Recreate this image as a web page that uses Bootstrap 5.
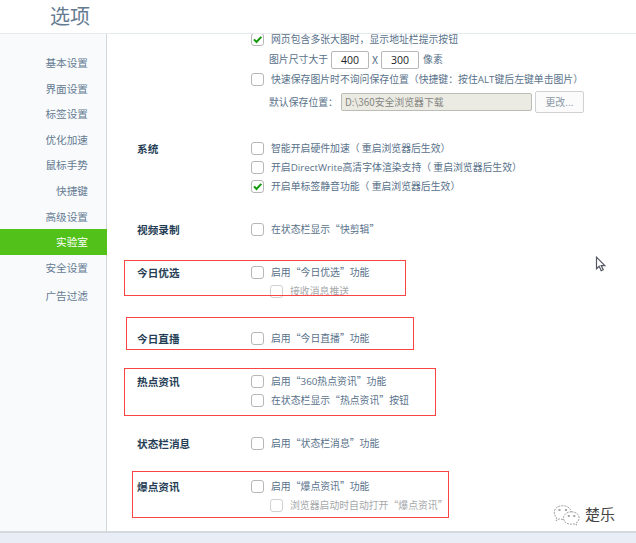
<!DOCTYPE html>
<html lang="zh-CN">
<head>
<meta charset="utf-8">
<meta name="viewport" content="width=device-width, initial-scale=1">
<title>选项</title>
<link href="https://cdn.jsdelivr.net/npm/bootstrap@5.3.0/dist/css/bootstrap.min.css" rel="stylesheet">
<style>
body{width:636px;height:543px;font-family:"Noto Sans CJK SC",sans-serif;font-size:9.85px;line-height:19px;color:#58718a;background:#fff}
.page-head{height:34px;border-bottom:1px solid #e6ebee;padding-left:50px}
.page-head h1{font-size:20px;line-height:32px;font-weight:400;color:#657b92}
.main{height:497px}
.side{width:107px;background:#f8fafc;border-right:1px solid #d3d7da;padding-top:16px}
.side .nav-link{font-size:10.65px;line-height:25.6px;height:25.6px;padding:0 18px 0 0;text-align:right;color:#657b92;white-space:nowrap}
.side .nav-link.active{background:#52c11a;color:#fff;margin-right:-1px;padding-right:19px}
.side .nav-link.spaced{margin-top:3px}
.content-pane{padding-left:30px}
.opt-group{margin-top:24px}
.group-name{width:114px;font-size:10.65px;font-weight:700;color:#263e55}
.opt{height:19px;white-space:nowrap}
.opt label{line-height:11px}
.opt .form-check-input{width:13px;height:13px;margin:0 7px 0 0;border:1.5px solid #b7b7b7;border-radius:3px;background-color:#fff;flex:none}
.opt .form-check-input:checked{background-color:#fff;background-size:11px 11px;background-image:url("data:image/svg+xml,%3Csvg xmlns='http://www.w3.org/2000/svg' viewBox='0 0 11 11'%3E%3Cpath d='M2 5.4 4.5 8 9.3 2.9' fill='none' stroke='%23149a0a' stroke-width='2'/%3E%3C/svg%3E")}
.opt.sub{padding-left:19px;color:#a5a8aa}
.opt.sub .form-check-input{border-color:#d0d0d0;opacity:1}
.opt.sub label{opacity:1}
.first-group{margin-top:-4px}
.indent{padding-left:18px;white-space:nowrap;height:21px}
.indent.tall{height:26px}
.indent .lead-in{margin-right:3px}
.times{width:12px;text-align:center;font-size:10.5px}
.num{width:38px;height:18px;padding:0;border:1px solid #b8b8b8;border-radius:2px;font-size:10.5px;line-height:16px;color:#222;text-align:center;background:#fff;font-family:"Open Sans","Noto Sans CJK SC",sans-serif}
.path-box,.path-box:disabled{width:191px;height:18px;padding:0 3px;border:1px solid #bbbcb6;border-radius:2px;background:#ebebe4;color:#858681;font-size:9.85px;line-height:16px}
.btn-change{width:49px;height:22px;margin-left:3px;padding:0;border:1px solid #cfd1d3;border-radius:2px;background:#fbfbfb;color:#8796a5;font-size:9.85px;line-height:20px}
.latin{font-family:"Open Sans",sans-serif;font-size:9.8px}
.foot{height:12px;background:#e9eef6;border-top:2px solid #d3d9df}
.frame{position:absolute;border:1px solid #fb4545;pointer-events:none}
.f1{left:124px;top:260px;width:282px;height:36px}
.f2{left:126px;top:317px;width:288px;height:33px}
.f3{left:124px;top:368px;width:312px;height:48px}
.f4{left:132px;top:471px;width:317px;height:47px}
.pointer{position:absolute;left:595px;top:256px}
.account{position:absolute;left:552px;top:500px;font-size:15px;line-height:28px;color:#444}
</style>
<script src="https://cdn.jsdelivr.net/npm/bootstrap@5.3.0/dist/js/bootstrap.bundle.min.js"></script>
</head>
<body class="position-relative overflow-hidden">
<header class="page-head"><h1 class="m-0">选项</h1></header>
<div class="main d-flex overflow-hidden">
  <nav class="side nav flex-column flex-nowrap flex-shrink-0">
    <a class="nav-link" href="#">基本设置</a>
    <a class="nav-link" href="#">界面设置</a>
    <a class="nav-link" href="#">标签设置</a>
    <a class="nav-link" href="#">优化加速</a>
    <a class="nav-link" href="#">鼠标手势</a>
    <a class="nav-link" href="#">快捷键</a>
    <a class="nav-link" href="#">高级设置</a>
    <a class="nav-link active" href="#">实验室</a>
    <a class="nav-link" href="#">安全设置</a>
    <a class="nav-link spaced" href="#">广告过滤</a>
  </nav>
  <main class="content-pane flex-grow-1">
    <section class="first-group d-flex">
      <div class="group-name flex-shrink-0"></div>
      <div>
        <div class="opt d-flex align-items-center"><input class="form-check-input" type="checkbox" id="c1" checked><label for="c1">网页包含多张大图时，显示地址栏提示按钮</label></div>
        <div class="indent d-flex align-items-center"><span class="lead-in">图片尺寸大于</span><input class="num form-control" value="400"><span class="times">X</span><input class="num form-control" value="300"><span class="ms-1">像素</span></div>
        <div class="opt d-flex align-items-center"><input class="form-check-input" type="checkbox" id="c2"><label for="c2">快速保存图片时不询问保存位置（快捷键：按住<span class="latin">ALT</span>键后左键单击图片）</label></div>
        <div class="indent tall d-flex align-items-center"><span class="lead-in">默认保存位置：</span><input class="path-box form-control" value="D:\360安全浏览器下载" disabled><button class="btn btn-change" type="button">更改...</button></div>
      </div>
    </section>
    <section class="opt-group d-flex">
      <div class="group-name flex-shrink-0">系统</div>
      <div>
        <div class="opt d-flex align-items-center"><input class="form-check-input" type="checkbox" id="c3"><label for="c3">智能开启硬件加速（ 重启浏览器后生效）</label></div>
        <div class="opt d-flex align-items-center"><input class="form-check-input" type="checkbox" id="c4"><label for="c4">开启<span class="latin">DirectWrite</span>高清字体渲染支持（ 重启浏览器后生效）</label></div>
        <div class="opt d-flex align-items-center"><input class="form-check-input" type="checkbox" id="c5" checked><label for="c5">开启单标签静音功能（ 重启浏览器后生效）</label></div>
      </div>
    </section>
    <section class="opt-group d-flex">
      <div class="group-name flex-shrink-0">视频录制</div>
      <div class="opt d-flex align-items-center"><input class="form-check-input" type="checkbox" id="c6"><label for="c6">在状态栏显示“快剪辑”</label></div>
    </section>
    <section class="opt-group d-flex">
      <div class="group-name flex-shrink-0">今日优选</div>
      <div>
        <div class="opt d-flex align-items-center"><input class="form-check-input" type="checkbox" id="c7"><label for="c7">启用“今日优选”功能</label></div>
        <div class="opt sub d-flex align-items-center"><input class="form-check-input" type="checkbox" id="c8" disabled><label for="c8">接收消息推送</label></div>
      </div>
    </section>
    <section class="opt-group d-flex pt-1">
      <div class="group-name flex-shrink-0">今日直播</div>
      <div class="opt d-flex align-items-center"><input class="form-check-input" type="checkbox" id="c9"><label for="c9">启用“今日直播”功能</label></div>
    </section>
    <section class="opt-group d-flex">
      <div class="group-name flex-shrink-0">热点资讯</div>
      <div>
        <div class="opt d-flex align-items-center"><input class="form-check-input" type="checkbox" id="c10"><label for="c10">启用“<span class="latin">360</span>热点资讯”功能</label></div>
        <div class="opt d-flex align-items-center"><input class="form-check-input" type="checkbox" id="c11"><label for="c11">在状态栏显示“热点资讯”按钮</label></div>
      </div>
    </section>
    <section class="opt-group d-flex">
      <div class="group-name flex-shrink-0">状态栏消息</div>
      <div class="opt d-flex align-items-center"><input class="form-check-input" type="checkbox" id="c12"><label for="c12">启用“状态栏消息”功能</label></div>
    </section>
    <section class="opt-group d-flex">
      <div class="group-name flex-shrink-0">爆点资讯</div>
      <div>
        <div class="opt d-flex align-items-center"><input class="form-check-input" type="checkbox" id="c13"><label for="c13">启用“爆点资讯”功能</label></div>
        <div class="opt sub d-flex align-items-center"><input class="form-check-input" type="checkbox" id="c14" disabled><label for="c14">浏览器启动时自动打开“爆点资讯”</label></div>
      </div>
    </section>
  </main>
</div>
<footer class="foot"></footer>

<div class="frame f1"></div>
<div class="frame f2"></div>
<div class="frame f3"></div>
<div class="frame f4"></div>

<svg class="pointer" width="12" height="17" viewBox="0 0 12 17"><path d="M1.5 1.2v11.6l2.7-2.5 2 4.4 2-.9-2-4.2h3.6z" fill="#fff" stroke="#555763" stroke-width="1.2"/></svg>

<div class="account d-flex align-items-center">
  <svg width="29" height="24" viewBox="0 0 29 24" fill="none" stroke="#888" stroke-width=".8" stroke-dasharray="2 1">
    <path d="M11 17.3c-1.400.2-2.600 0-3.800-.4L4 18.600l.8-2.900C-.2 11.500 2.300 3.700 10.500 3.700c4.600 0 8.100 2.500 8.800 6"/>
    <path d="M19.300 9.800c8.300 0 10.300 8.200 4.600 11.300l.6 2-2.500-1.200c-6 1.200-10.500-1.500-10.500-5.800 0-3.500 3.500-6.300 7.800-6.300z"/>
    <path d="M6.500 8h2M13 8h2M15.800 14h2M21.300 14h2" stroke-dasharray="none" stroke-width="1.300"/>
  </svg>
  <span class="ms-1">楚乐</span>
</div>
</body>
</html>
